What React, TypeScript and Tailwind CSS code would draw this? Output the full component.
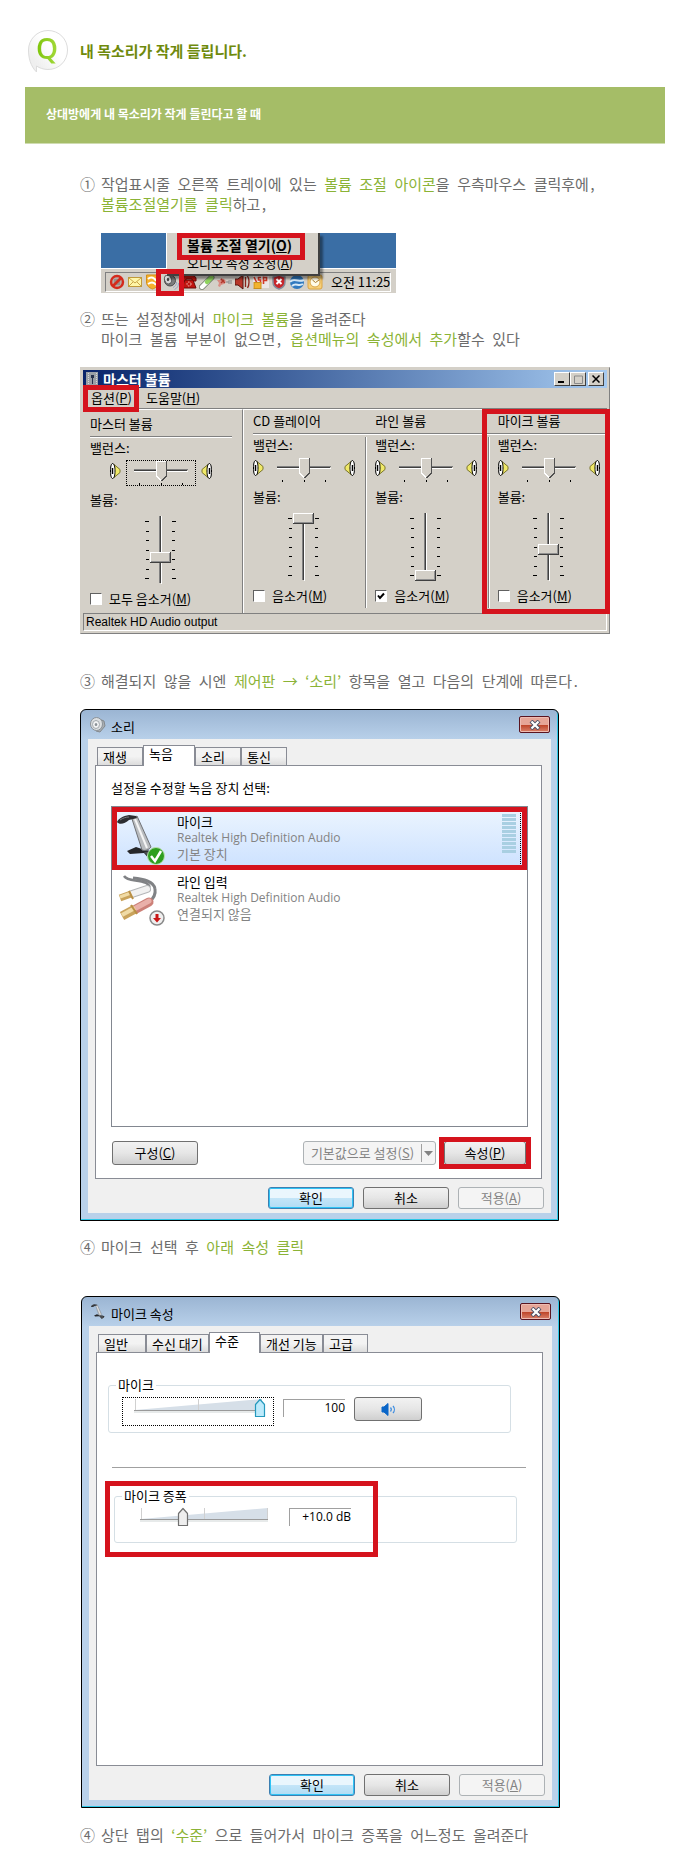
import { useState, type ReactNode } from "react"
import clsx from "clsx"

const uiFont = "font-['Noto_Sans_CJK_KR',sans-serif]"

/* ---------- shared bits ---------- */

function Highlight({ className }: { className: string }) {
  return <span aria-hidden="true" className={clsx("absolute z-10 border-[5px] border-[#d5131d] pointer-events-none", className)} />
}

function Em({ children }: { children: ReactNode }) {
  return <em className="not-italic text-[#8bb336]">{children}</em>
}

function Step({ mark, className, children }: { mark: string; className?: string; children: ReactNode }) {
  return (
    <p className={clsx("flex gap-1.5 text-[15px] leading-5 text-[#6c6c6c]", className)}>
      <span>{mark}</span>
      <span>{children}</span>
    </p>
  )
}

/* ---------- tray ---------- */

function TrayIcons() {
  return (
    <div className="flex items-center gap-0.5">
      <svg width="16" height="16" viewBox="0 0 16 16">
        <circle cx="8" cy="8" r="6" fill="#b9a9a4" stroke="#d42a1c" strokeWidth="2.4" />
        <path d="M5 6h6M5 8h6M5 10h6" stroke="#777" />
        <path d="M4 12 12 4" stroke="#d42a1c" strokeWidth="2.6" />
      </svg>
      <svg width="16" height="16" viewBox="0 0 16 16">
        <rect x="1.5" y="3.5" width="13" height="9" fill="#fff6a8" stroke="#c09a3a" />
        <path d="M2 4l6 5 6-5M2 12l4-4M14 12l-4-4" fill="none" stroke="#c9a548" />
      </svg>
      <svg width="16" height="16" viewBox="0 0 16 16">
        <path d="M1.500 1h12v7c0 4-3 6-6 7-3-1-6-3-6-7z" fill="#f5b02c" stroke="#d58f16" />
        <path d="M3 5c3-3 7-1 8 2M3 10c3-2 6-2 8 1" fill="none" stroke="#fff" strokeWidth="2" />
      </svg>
      <span className="relative flex">
        <svg width="16" height="16" viewBox="0 0 16 16">
          <ellipse cx="7" cy="6.500" rx="5.500" ry="5.500" fill="#7e7e7e" stroke="#4f4f4f" />
          <ellipse cx="5" cy="5.500" rx="3.500" ry="4.500" fill="#d8d8d8" stroke="#555" transform="rotate(-20 5 5.500)" />
          <ellipse cx="5" cy="5.500" rx="1.200" ry="1.800" fill="#444" />
          <path d="M13.500 8c0 3-1 4-3.500 5.500M15.500 9c0 3-1 5-4 6.500" fill="none" stroke="#9aa6c4" />
        </svg>
        <Highlight className="-left-[7px] -top-[5px] w-7 h-[27px]" />
      </span>
      <svg width="16" height="16" viewBox="0 0 16 16">
        <path d="M1 4c1-4 13-4 14 0v3h-4V5H5v2H1z" fill="#c0150f" stroke="#6b0b08" />
        <path d="M4 6h8l3 8H1z" fill="#c0150f" stroke="#6b0b08" />
        <circle cx="8" cy="10" r="2" fill="none" stroke="#f3c5bd" strokeDasharray="1.500 1" />
      </svg>
      <svg width="16" height="16" viewBox="0 0 16 16">
        <path d="M3 13 12.500 3.500" stroke="#6d7a68" strokeWidth="6" strokeLinecap="round" />
        <path d="M3 13 8 8" stroke="#fff" strokeWidth="4.500" strokeLinecap="round" />
        <path d="M8 8l4.500-4.500" stroke="#8fd45e" strokeWidth="4.500" strokeLinecap="round" />
      </svg>
      <svg width="16" height="16" viewBox="0 0 16 16">
        <path d="M0 6h3l1-2 3 1 2 2-2 3-3 1-1 2-2-1 1-3z" fill="#d98d84" />
        <path d="M4 5l4 4M4 9l3-3" stroke="#b3382c" strokeWidth="1.500" />
        <path d="M9 8h2l1-1h3M11 9h4" stroke="#9a9a9a" strokeWidth="1.500" fill="none" />
      </svg>
      <svg width="16" height="16" viewBox="0 0 16 16">
        <path d="M0 5h3l5-4v14l-5-4H0z" fill="#b8382a" stroke="#571710" />
        <path d="M10.500 3v10M12.500 2c2 3 2 9 0 12" fill="none" stroke="#8a2318" strokeWidth="1.300" />
      </svg>
      <svg width="16" height="16" viewBox="0 0 16 16">
        <rect x="0" y="1" width="16" height="13" fill="#ece6e6" />
        <path d="M1 3l3 6M8 3.500H5.500v2.500h2v3H5M10.500 2.500V10M10.500 3.500h3v3h-3" fill="none" stroke="#d33a28" strokeWidth="1.600" />
        <rect x="1" y="8.500" width="7" height="6" fill="#f2b32c" stroke="#c98f1c" />
      </svg>
      <svg width="16" height="16" viewBox="0 0 16 16">
        <path d="M8 1l6 2v5c0 4-3 6-6 7-3-1-6-3-6-7V3z" fill="#c8262a" stroke="#868c9a" strokeWidth="1.500" />
        <path d="M5.500 5l5 5M10.500 5l-5 5" stroke="#fff" strokeWidth="2" />
      </svg>
      <svg width="16" height="16" viewBox="0 0 16 16">
        <circle cx="8" cy="8" r="7" fill="#2f79bf" />
        <path d="M1 8c4-5 7 1 14-2M3 12c4-4 6 1 11-2" fill="none" stroke="#d5e9f7" strokeWidth="2" />
      </svg>
      <svg width="16" height="16" viewBox="0 0 16 16">
        <rect x="1" y="1" width="14" height="14" rx="2" fill="#f6cf7a" stroke="#dba443" />
        <circle cx="8" cy="8" r="5" fill="#fffbe8" stroke="#d9a548" />
        <path d="M5.500 6l3 2.500L12 6" fill="none" stroke="#a6772b" />
      </svg>
    </div>
  )
}

function TrayCapture() {
  return (
    <div className={clsx("relative ml-[21px] w-[295px] max-w-full bg-[#3a6ea5] pt-[35px] text-black", uiFont)}>
      <div className="flex h-[25px] items-start border-t border-white bg-[#d4d0c8] pl-1 pt-[3px]">
        <div className="flex h-5 w-[286px] items-center gap-2 border border-l-[#808080] border-t-[#808080] border-r-white border-b-white pl-[3px]">
          <TrayIcons />
          <time className="whitespace-nowrap text-[13px] leading-4">오전 11:25</time>
        </div>
      </div>

      {/* context menu */}
      <ul className="absolute left-[65px] top-0 h-[43px] w-[154px] border-b-2 border-r-2 border-l border-l-white border-b-[#404040] border-r-[#404040] bg-[#d4d0c8] pt-[3px] shadow-[3px_3px_2px_rgba(0,0,0,0.4)]">
        <li>
          <button className="block w-full whitespace-nowrap pl-5 text-left text-[14px] font-bold leading-[18px]">
            볼륨 조절 열기(<u>O</u>)
          </button>
        </li>
        <li>
          <button className="block w-full whitespace-nowrap pl-5 text-left text-[13px] leading-[18px]">
            오디오 속성 조정(<u>A</u>)
          </button>
        </li>
        <Highlight className="left-2.5 top-0 h-[27px] w-32" />
      </ul>
    </div>
  )
}

/* ---------- classic volume mixer ---------- */

function SpeakerGlyph({ flip }: { flip?: boolean }) {
  return (
    <svg width="11" height="16" viewBox="0 0 11 16" className={flip ? "-scale-x-100" : ""}>
      <path d="M4 1.500l6 5v3l-6 5z" fill="#f0e968" stroke="#7a742a" />
      <path d="M2.500.5C4.500 1 5 4 5 8s-.5 7-2.500 7.500C1 15 .5 12 .5 8S1 1 2.500.5z" fill="#fff" stroke="#000" />
      <path d="M2.500 5v6" stroke="#000" strokeWidth="1.500" />
    </svg>
  )
}

function BalanceSlider({ label, focused }: { label: string; focused?: boolean }) {
  const [value, setValue] = useState(50)
  const x = 8 + (value / 100) * 54
  return (
    <span className={clsx("relative block h-[26px] w-[70px]", focused && "outline-1 -outline-offset-1 outline-dotted outline-black")}>
      <svg width="70" height="26" viewBox="0 0 70 26" shapeRendering="crispEdges">
        <path d="M8 9.500h54" stroke="#808080" />
        <path d="M8 10.500h53" stroke="#404040" />
        <path d="M8 11.500h54" stroke="#fff" />
        <path d="M13 24h1M35 24h1M56 24h1" stroke="#000" strokeWidth="2" />
        <g transform={`translate(${x - 5} 1)`}>
          <path d="M0 0h11v15l-5 5-6-5z" fill="#d4d0c8" />
          <path d="M.5 15V.5H10M.5 15l5 5" fill="none" stroke="#fff" />
          <path d="M10.500 0v15l-5 5" fill="none" stroke="#505050" />
        </g>
      </svg>
      <input
        type="range"
        aria-label={label}
        value={value}
        onChange={(e) => setValue(Number(e.target.value))}
        className="absolute inset-0 h-full w-full cursor-pointer opacity-0"
      />
    </span>
  )
}

const tickRows = [5, 15, 24, 34, 43, 53, 62]

function VolumeSlider({ label, initial }: { label: string; initial: number }) {
  const [value, setValue] = useState(initial)
  const y = Math.round(57 - (value / 100) * 57)
  return (
    <span className="relative mx-auto block h-[68px] w-8">
      <svg width="32" height="68" viewBox="0 0 32 68" shapeRendering="crispEdges">
        {tickRows.map((t, i) => {
          const edge = i === 0 || i === tickRows.length - 1
          return <path key={t} d={edge ? `M0 ${t}.5h4M27 ${t}.5h4` : `M1 ${t}.5h3M27 ${t}.5h3`} stroke="#000" />
        })}
        <path d="M14.500 0v67" stroke="#808080" />
        <path d="M15.500 0v67" stroke="#404040" />
        <path d="M16.500 0v68" stroke="#fff" />
        <g transform={`translate(5 ${y})`}>
          <path d="M0 0h21v11H0z" fill="#d4d0c8" />
          <path d="M.5 10V.5H20" fill="none" stroke="#fff" />
          <path d="M20.500 0v10.500H0" fill="none" stroke="#404040" />
          <path d="M19.500 1v8.500H1" fill="none" stroke="#909090" />
        </g>
      </svg>
      <input
        type="range"
        aria-label={label}
        value={value}
        onChange={(e) => setValue(Number(e.target.value))}
        className="absolute inset-0 h-full w-full cursor-pointer opacity-0 [direction:rtl] [writing-mode:vertical-lr]"
      />
    </span>
  )
}

function MuteBox({ label, checked }: { label: string; checked?: boolean }) {
  return (
    <label className="mt-[7px] flex items-center gap-[7px] whitespace-nowrap leading-4">
      <span className="relative flex">
        <input
          type="checkbox"
          defaultChecked={checked}
          className="peer size-3 appearance-none border border-l-[#606060] border-t-[#606060] border-b-white border-r-white bg-white"
        />
        <svg viewBox="0 0 12 12" className="pointer-events-none absolute inset-0 hidden size-3 peer-checked:block">
          <path d="M3 5.500l2 2.500 4-4.500" fill="none" stroke="#000" strokeWidth="2" />
        </svg>
      </span>
      <span>
        {label}(<u>M</u>)
      </span>
    </label>
  )
}

type Channel = { name: string; volume: number; muted?: boolean }

const channels: Channel[] = [
  { name: "CD 플레이어", volume: 100 },
  { name: "라인 볼륨", volume: 0, muted: true },
  { name: "마이크 볼륨", volume: 46 },
]

function ChannelControls({ channel, master }: { channel: Channel; master?: boolean }) {
  return (
    <>
      <div className="leading-4">밸런스:</div>
      <div className={clsx("mt-1 flex w-[102px] items-start justify-between", master && "mx-auto")}>
        <span className="mt-[3px]"><SpeakerGlyph /></span>
        <BalanceSlider label={`${channel.name} 밸런스`} focused={master} />
        <span className="mt-[3px]"><SpeakerGlyph flip /></span>
      </div>
      <div className="mt-1.5 leading-4">볼륨:</div>
      <div className={clsx("mt-2 w-[102px]", master && "mx-auto")}>
        <VolumeSlider label={`${channel.name} 볼륨`} initial={channel.volume} />
      </div>
      <MuteBox label={master ? "모두 음소거" : "음소거"} checked={channel.muted} />
    </>
  )
}

const captionButton =
  "flex h-[14px] w-4 items-center justify-center border border-l-white border-t-white border-b-[#404040] border-r-[#404040] bg-[#d4d0c8]"

function MixerWindow() {
  return (
    <section
      className={clsx(
        "relative border border-b-[#808080] border-l-[#d4d0c8] border-r-[#808080] border-t-[#d4d0c8] bg-[#d4d0c8] p-0.5 text-[13px] text-black",
        uiFont
      )}
    >
      <header className="flex h-[18px] items-center bg-linear-to-r from-[#0a246a] to-[#a6caf0] px-[3px]">
        <svg width="12" height="14" viewBox="0 0 12 14" shapeRendering="crispEdges">
          <path d="M0 0h12v14H0z" fill="#9aa0a6" />
          <path d="M2 1v12M10 1v12" stroke="#d8d8d8" strokeDasharray="1 1" />
          <path d="M5 3h3v3H5zM6 6h1v6H6z" fill="#26324c" />
        </svg>
        <h2 className="ml-[5px] text-[14px] font-bold leading-[18px] text-white">마스터 볼륨</h2>
        <div className="ml-auto flex">
          <button aria-label="최소화" className={captionButton}>
            <svg width="8" height="8" viewBox="0 0 8 8"><path d="M0 7h6" stroke="#000" strokeWidth="2" /></svg>
          </button>
          <button aria-label="최대화" className={captionButton}>
            <svg width="9" height="9" viewBox="0 0 9 9"><path d="M.5 1h8v7.500h-8z" fill="none" stroke="#8a8a8a" /></svg>
          </button>
          <button aria-label="닫기" className={clsx("ml-0.5", captionButton)}>
            <svg width="8" height="8" viewBox="0 0 8 8"><path d="M.5.5l7 7M7.500.5l-7 7" stroke="#000" strokeWidth="1.500" /></svg>
          </button>
        </div>
      </header>

      <nav className="relative flex h-5 items-center gap-3.5 pl-2 leading-5">
        <button>옵션(<u>P</u>)</button>
        <button>도움말(<u>H</u>)</button>
        <Highlight className="left-0 -top-[3px] h-[27px] w-14" />
      </nav>

      <div className="relative flex border-t border-[#808080]">
        <div className="w-[160px] border-r border-t border-r-[#808080] border-t-white pb-1.5 pl-[7px] pr-2.5 pt-1.5">
          <h3 className="leading-4">마스터 볼륨</h3>
          <div className="mb-0.5 mt-1 border-b border-t border-b-white border-t-[#808080]" />
          <ChannelControls channel={{ name: "마스터", volume: 37 }} master />
        </div>
        <div className="grid flex-1 grid-cols-[122fr_122fr_109fr] border-l border-t border-white pl-[9px] pt-[3px]">
          {channels.map((channel, i) => (
            <div key={channel.name}>
              <h3 className="leading-4">{channel.name}</h3>
              <div className="mt-1 border-b border-t border-b-white border-t-[#808080]" />
              <div className={clsx("mt-0.5 pb-1", i < 2 && "mr-[9px] border-r border-[#808080] shadow-[1px_0_0_#fff]")}>
                <ChannelControls channel={channel} />
              </div>
            </div>
          ))}
        </div>
        <Highlight className="-bottom-px -right-[3px] top-0 w-32" />
      </div>

      <footer className="border border-b-white border-l-[#808080] border-r-white border-t-[#808080] pl-0.5 font-['Liberation_Sans',sans-serif] text-[12px] leading-4">
        Realtek HD Audio output
      </footer>
    </section>
  )
}

/* ---------- aero dialogs ---------- */

const aeroFace = "border-[#707070] bg-linear-to-b from-[#f2f2f2] via-[#e6e6e6] to-[#cfcfcf] text-black"

function AeroButton({ kind = "normal", className, children }: { kind?: "normal" | "primary" | "disabled"; className?: string; children: ReactNode }) {
  return (
    <button
      disabled={kind === "disabled"}
      className={clsx(
        "flex items-center justify-center whitespace-nowrap rounded-[3px] border leading-4",
        kind === "normal" && aeroFace,
        kind === "primary" &&
          "border-[#3c7fb1] bg-linear-to-b from-[#eaf6fd] from-50% via-[#c4e5f8] via-50% to-[#b0dcf4] text-black shadow-[inset_0_0_0_1px_#2fc3f5]",
        kind === "disabled" && "border-[#adb2b5] bg-[#f4f4f4] text-[#838383]",
        className
      )}
    >
      {children}
    </button>
  )
}

type AeroDialogProps = {
  title: string
  icon: ReactNode
  tabs: { name: string; width: string }[]
  active: string
  className?: string
  children: ReactNode
}

function AeroDialog({ title, icon, tabs, active, className, children }: AeroDialogProps) {
  return (
    <section
      className={clsx(
        "max-w-[479px] rounded-t-md border border-black bg-[#b9d1ea] bg-linear-to-b from-[#9bb5d3] to-[#b9d1ea] to-[30px] px-[7px] pb-[7px] text-[13px] text-black shadow-[inset_-1px_-1px_0_#2cc7e6]",
        uiFont,
        className
      )}
    >
      <header className="flex h-[29px] items-center gap-[5px] pl-0.5">
        {icon}
        <h2 className="mt-1 leading-4">{title}</h2>
        <button
          aria-label="닫기"
          className="ml-auto mr-px flex h-[17px] w-[31px] items-center justify-center rounded-[2px] border border-[#5a1420] bg-linear-to-b from-[#e6a597] from-50% via-[#bb3d20] via-50% to-[#d9806a] shadow-[inset_0_0_0_1px_#eebcb2]"
        >
          <svg width="12" height="10" viewBox="0 0 12 10">
            <path d="M2 1l8 8M10 1L2 9" stroke="#4b4f66" strokeWidth="4" />
            <path d="M2.500 1.500l7 7M9.500 1.500l-7 7" stroke="#fff" strokeWidth="2.200" />
          </svg>
        </button>
      </header>

      <div className="bg-[#f0f0f0] px-[7px] pb-1 pt-1.5">
        <div role="tablist" className="flex items-end pl-0.5">
          {tabs.map((tab) => {
            const selected = tab.name === active
            return (
              <button
                key={tab.name}
                role="tab"
                aria-selected={selected}
                className={clsx(
                  "whitespace-nowrap border border-b-0 border-[#898c95] pl-[5px] text-left leading-4",
                  tab.width,
                  selected ? "relative z-10 -mb-px h-[21px] bg-white pb-1" : "h-[18px] bg-linear-to-b from-[#f3f3f3] from-50% to-[#dcdcdc]"
                )}
              >
                {tab.name}
              </button>
            )
          })}
        </div>
        <div role="tabpanel" className="mr-0.5 flex min-h-[414px] flex-col border border-[#898c95] bg-white">
          {children}
        </div>
        <div className="mt-2 flex justify-end gap-[9px]">
          <AeroButton kind="primary" className="h-[22px] w-[86px]">확인</AeroButton>
          <AeroButton className="h-[22px] w-[86px]">취소</AeroButton>
          <AeroButton kind="disabled" className="h-[22px] w-[86px]">
            <span>적용(<u>A</u>)</span>
          </AeroButton>
        </div>
      </div>
    </section>
  )
}

function SoundIcon() {
  return (
    <svg width="16" height="16" viewBox="0 0 16 16" className="shrink-0">
      <path d="M9 2l5 2 1 5-5 6-4-1z" fill="#a9aeb2" stroke="#83898e" />
      <ellipse cx="6.500" cy="7" rx="6" ry="6.500" fill="#dcdfe1" stroke="#8b9298" />
      <ellipse cx="6" cy="7.500" rx="3.500" ry="4" fill="#f2f3f4" stroke="#a3a9ad" />
      <ellipse cx="6" cy="7.500" rx="1.300" ry="1.600" fill="#8b9297" />
    </svg>
  )
}

function MicDrawing() {
  return (
    <>
      <path d="M10 37l9-4 9 3 14 2 1 3-9 6-7-8-14 1z" fill="#26272a" />
      <path d="M27 38l8 9 7-4-5-6z" fill="#4b4d51" />
      <path d="M15 5l5-3 14 31c-2 3-6 4-9 3z" fill="#b9bcbf" stroke="#6f7175" />
      <path d="M18 5l12 29" stroke="#f4f4f4" strokeWidth="2" />
      <path d="M0 8c1-3 6-6 12-7l7 1 1 2-8 2C8 10 2 11 0 8z" fill="#2c2d30" />
      <path d="M3 6c3-2 6-3 9-3" stroke="#77797d" fill="none" />
    </>
  )
}

function MicIcon() {
  return (
    <svg width="48" height="51" viewBox="0 0 48 51" className="shrink-0">
      <MicDrawing />
      <circle cx="39" cy="42" r="8.500" fill="#2e9e1f" stroke="#b9e0b0" />
      <path d="M34 42l4 5 6-10" fill="none" stroke="#fff" strokeWidth="2.500" />
    </svg>
  )
}

function LineInIcon() {
  return (
    <svg width="48" height="52" viewBox="0 0 48 52" className="shrink-0">
      <path d="M7 2c4 6 14 3 22 7 5 3 4 5 0 7" fill="none" stroke="#808285" strokeWidth="2.500" />
      <path d="M16 4c10 1 21 3 22 11 1 6-2 10-6 13" fill="none" stroke="#808285" strokeWidth="3" />
      <path d="M15 20l15-5" stroke="#b4b6b8" strokeWidth="8" strokeLinecap="round" />
      <path d="M15 20l15-5" stroke="#f1f1f1" strokeWidth="6" strokeLinecap="round" />
      <path d="M3 24l11-4" stroke="#c9a35c" strokeWidth="7" />
      <path d="M3 23l11-4" stroke="#f0dba6" strokeWidth="3" />
      <path d="M12 17l4 8" stroke="#b98f45" strokeWidth="2" />
      <path d="M19 35l13-7" stroke="#cc8078" strokeWidth="9" strokeLinecap="round" />
      <path d="M19 34l13-7" stroke="#e9b0a9" strokeWidth="5" strokeLinecap="round" />
      <path d="M5 42l13-7" stroke="#c9a35c" strokeWidth="9" />
      <path d="M5 41l13-7" stroke="#f0dba6" strokeWidth="4" />
      <path d="M14 31l6 9" stroke="#b98f45" strokeWidth="2" />
      <circle cx="40" cy="44" r="7" fill="#efefef" stroke="#8a8a8a" strokeWidth="1.500" />
      <path d="M38.500 40h3v4h2.500l-4 4.500-4-4.500h2.500z" fill="#c91515" />
    </svg>
  )
}

function DeviceText({ name, status }: { name: string; status: string }) {
  return (
    <div className="leading-4 text-[#838383]">
      <div className="text-black">{name}</div>
      <div className="font-['Open_Sans',sans-serif] text-[12px]">Realtek High Definition Audio</div>
      <div>{status}</div>
    </div>
  )
}

function SoundDialog() {
  return (
    <AeroDialog
      title="소리"
      icon={<SoundIcon />}
      active="녹음"
      tabs={[
        { name: "재생", width: "w-[46px]" },
        { name: "녹음", width: "w-[52px]" },
        { name: "소리", width: "w-[46px]" },
        { name: "통신", width: "w-[46px]" },
      ]}
    >
      <div className="flex flex-1 flex-col pb-[13px] pl-[15px] pr-[13px] pt-3.5">
        <p className="leading-4">설정을 수정할 녹음 장치 선택:</p>
        <ul className="mt-2.5 flex-1 border border-[#828790]">
          <li className="relative flex h-[63px] gap-3 bg-linear-to-b from-[#ecf5fe] to-[#cce1ff] pl-[5px] pt-[7px]">
            <MicIcon />
            <DeviceText name="마이크" status="기본 장치" />
            <div className="ml-auto mr-[11px] flex flex-col gap-px">
              {Array.from({ length: 10 }, (_, i) => (
                <span key={i} className="h-[3px] w-3.5 bg-[#a9cfe2]" />
              ))}
            </div>
            <span className="absolute bottom-0 right-1.5 top-0 border-r border-dotted border-black" />
            <Highlight className="inset-0" />
          </li>
          <li className="flex gap-3 pl-[5px] pt-1">
            <LineInIcon />
            <DeviceText name="라인 입력" status="연결되지 않음" />
          </li>
        </ul>
        <div className="mt-3.5 flex pl-px pr-0.5">
          <AeroButton className="h-6 w-[86px]"><span>구성(<u>C</u>)</span></AeroButton>
          <AeroButton kind="disabled" className="ml-auto h-6 w-[133px]">
            <span className="flex-1">기본값으로 설정(<u>S</u>)</span>
            <span className="flex h-[18px] w-3.5 items-center justify-center border-l border-[#a0a0a0]">
              <svg width="9" height="5" viewBox="0 0 9 5"><path d="M0 0h9L4.500 5z" fill="#838383" /></svg>
            </span>
          </AeroButton>
          <span className="relative ml-2">
            <AeroButton className="h-6 w-[82px]"><span>속성(<u>P</u>)</span></AeroButton>
            <Highlight className="-inset-x-[5px] -inset-y-1" />
          </span>
        </div>
      </div>
    </AeroDialog>
  )
}

function LevelRow({ label, initial, text, focused, children }: { label: string; initial: number; text: string; focused?: boolean; children?: ReactNode }) {
  const [value, setValue] = useState(initial)
  const x = Math.round(14 + (value / 100) * 124)
  return (
    <div className="flex items-start gap-[9px]">
      <span className={clsx("relative block h-[29px] w-[152px] shrink-0", focused && "outline-1 -outline-offset-1 outline-dotted outline-black")}>
        <svg width="152" height="29" viewBox="0 0 152 29">
          <path d="M13 13L140 2v11z" fill="#d6dfe8" />
          <path d="M13.500 2v11M76.500 2v11M139.500 2v11" stroke="#d0d0d0" />
          <path d="M12 13.500h128" stroke="#9a9a9a" />
          <path d="M12 15h128" stroke="#e7eaea" strokeWidth="2" />
          <path
            d={`M${x - 4.5} 19.500v-12l4.500-5 4.500 5v12z`}
            fill={focused ? "#bdeafb" : "#eeeeee"}
            stroke={focused ? "#2499bd" : "#707070"}
            strokeWidth="1.200"
            strokeLinejoin="round"
          />
        </svg>
        <input
          type="range"
          aria-label={label}
          value={value}
          onChange={(e) => setValue(Number(e.target.value))}
          className="absolute inset-0 h-full w-full cursor-pointer opacity-0"
        />
      </span>
      <output className="mt-0.5 h-[18px] w-[62px] shrink-0 border-l border-t border-[#a0a0a0] text-right font-['Open_Sans',sans-serif] text-[12px] leading-4">
        {text}
      </output>
      {children}
    </div>
  )
}

function MicDialog() {
  return (
    <AeroDialog
      title="마이크 속성"
      icon={
        <svg width="15" height="16" viewBox="0 0 48 51" className="shrink-0">
          <MicDrawing />
        </svg>
      }
      active="수준"
      className="ml-px"
      tabs={[
        { name: "일반", width: "w-12" },
        { name: "수신 대기", width: "w-[63px]" },
        { name: "수준", width: "w-[51px]" },
        { name: "개선 기능", width: "w-[63px]" },
        { name: "고급", width: "w-[45px]" },
      ]}
    >
      <fieldset className="ml-[11px] mr-[31px] mt-6 rounded-[3px] border border-[#d5dfe5] pb-1.5 pl-[13px]">
        <legend className="-ml-1.5 px-0.5 leading-4">마이크</legend>
        <div className="pt-1">
          <LevelRow label="마이크" initial={100} text="100" focused>
            <button aria-label="음소거" className={clsx("flex h-6 w-[68px] items-center justify-center rounded-[3px] border", aeroFace)}>
              <svg width="15" height="13" viewBox="0 0 15 13">
                <path d="M1 4h2l4-3.500v12L3 9H1z" fill="#0a66c8" stroke="#0a66c8" strokeLinejoin="round" />
                <path d="M9.500 4.500c1 1.200 1 2.800 0 4M12 3c1.800 2 1.800 5 0 7" fill="none" stroke="#3a8be0" strokeWidth="1.200" />
              </svg>
            </button>
          </LevelRow>
        </div>
      </fieldset>

      <hr className="ml-[15px] mr-4 mt-[34px] border-[#a0a0a0]" />

      <div className="relative ml-[17px] mr-[25px] mt-5">
        <fieldset className="rounded-[3px] border border-[#d5dfe5] pb-[7px] pl-[13px]">
          <legend className="-ml-1.5 px-0.5 leading-4">마이크 증폭</legend>
          <div className="pt-0.5">
            <LevelRow label="마이크 증폭" initial={33} text="+10.0 dB" />
          </div>
        </fieldset>
        <Highlight className="-left-[9px] -top-[7px] h-[76px] w-[273px]" />
      </div>
    </AeroDialog>
  )
}

/* ---------- page ---------- */

export default function App() {
  return (
    <main className="min-h-screen bg-white pb-[26px] font-['Noto_Sans_Mono_CJK_KR','Noto_Sans_CJK_KR',sans-serif]">
      <header className="flex items-center gap-3 pl-7 pt-[30px] font-['Noto_Sans_CJK_KR',sans-serif]">
        <span className="relative flex h-[43px] w-10 justify-center">
          <svg width="40" height="43" viewBox="0 0 40 43" className="absolute inset-0">
            <defs>
              <linearGradient id="bubble" x1="0" y1="1" x2="1" y2="0">
                <stop offset="0.2" stopColor="#efefef" />
                <stop offset="0.6" stopColor="#fff" />
              </linearGradient>
            </defs>
            <path
              d="M20 .5C9 .5.5 9.500.5 20c0 8 2 16 8 22V36c3 2 7 3.500 11.500 3.500C31 39.500 39.500 31 39.500 20S31 .5 20 .5z"
              fill="url(#bubble)"
              stroke="#dcdcdc"
            />
          </svg>
          <span className="relative bg-linear-to-r from-[#7cc400] to-[#a8dc3c] bg-clip-text pr-0.5 font-['Open_Sans',sans-serif] text-[28px] font-semibold leading-9 text-transparent">
            Q
          </span>
        </span>
        <h1 className="pb-0.5 text-[15px] font-bold leading-5 text-[#6f8a0c]">내 목소리가 작게 들립니다.</h1>
      </header>

      <div className="mx-[25px] mt-3.5 flex h-[57px] items-center border-b border-[#cfdcb0] bg-[#a5bd67] pb-0.5 pl-[21px] font-['Noto_Sans_CJK_KR',sans-serif] text-[12px] font-bold text-white">
        상대방에게 내 목소리가 작게 들린다고 할 때
      </div>

      <article className="px-20 pt-[30px]">
        <Step mark="①" className="mb-[19px]">
          작업표시줄 오른쪽 트레이에 있는 <Em>볼륨 조절 아이콘</Em>을 우측마우스 클릭후에,
          <br />
          <Em>볼륨조절열기를 클릭</Em>하고,
        </Step>
        <TrayCapture />

        <Step mark="②" className="mb-[18px] mt-4">
          뜨는 설정창에서 <Em>마이크 볼륨</Em>을 올려준다
          <br />
          마이크 볼륨 부분이 없으면, <Em>옵션메뉴의 속성에서 추가</Em>할수 있다
        </Step>
        <MixerWindow />

        <Step mark="③" className="mb-[18px] mt-[37px]">
          해결되지 않을 시엔 <Em>제어판 → ‘소리’</Em> 항목을 열고 다음의 단계에 따른다.
        </Step>
        <SoundDialog />

        <Step mark="④" className="mb-[39px] mt-4">
          마이크 선택 후 <Em>아래 속성 클릭</Em>
        </Step>
        <MicDialog />

        <Step mark="④" className="mt-[17px]">
          상단 탭의 <Em>‘수준’</Em> 으로 들어가서 마이크 증폭을 어느정도 올려준다
        </Step>
      </article>
    </main>
  )
}
